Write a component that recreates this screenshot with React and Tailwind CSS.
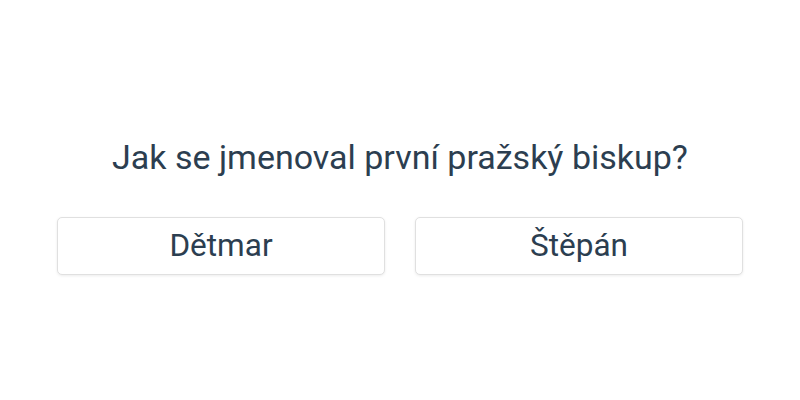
export default function App() {
  const answers = ["Dětmar", "Štěpán"];

  return (
    <div className="w-[800px] h-[400px] bg-white flex flex-col items-center pt-[137px] font-['Roboto',sans-serif] text-[#2c3e50]">
      <h1 className="text-[34px] leading-[40px] font-normal">Jak se jmenoval první pražský biskup?</h1>
      <div className="mt-[40px] w-full px-[57px] grid grid-cols-2 gap-[30px]">
        {answers.map((a) => (
          <button
            key={a}
            className="h-[58px] bg-white border border-[#e0e0e0] rounded-[5px] shadow-[0_1px_3px_rgba(0,0,0,0.08)] text-[31.5px] leading-none"
          >
            {a}
          </button>
        ))}
      </div>
    </div>
  );
}
